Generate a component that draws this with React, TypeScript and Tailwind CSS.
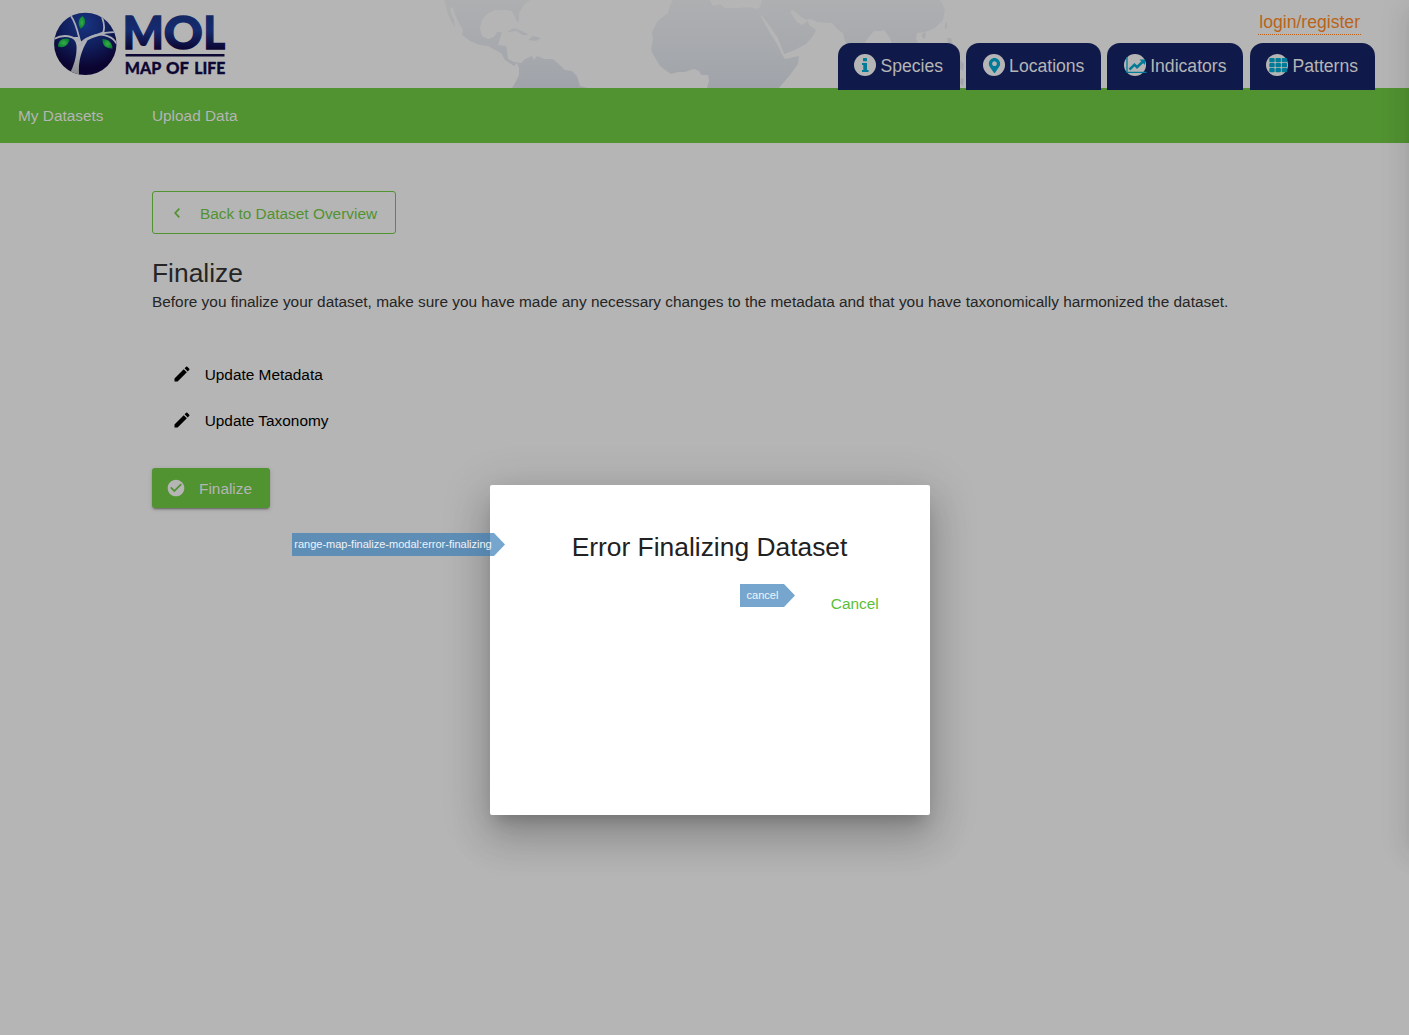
import React from "react";
import { MdEdit, MdCheckCircle } from "react-icons/md";
import { FaMapMarkerAlt } from "react-icons/fa";

function WorldMap() {
  return (
    <svg className="absolute left-[430px] top-0" width="560" height="88" viewBox="430 0 560 88">
      <defs>
        <linearGradient id="land" x1="0" y1="0" x2="0" y2="88" gradientUnits="userSpaceOnUse">
          <stop offset="0" stopColor="#aeafb1" />
          <stop offset="1" stopColor="#a0a4aa" />
        </linearGradient>
      </defs>
      <g fill="url(#land)">
        <path d="M444 0L446 6L448 14L451 21L455 27L454 20L451 13L450 7L453 8L456 17L460 25L463 30L462 35L470 41L480 45L488 46L495 50L501 53L505 60L511 64L514 66L517 63L519 68L519 75L515 83L512 88H588L580 86L577 76L572 71L565 70L560 65L553 59L545 59L537 56L534 60L532 56L525 59L521 63L514 62L508 59L507 50L506 46L498 45L502 32L497 32L494 37L488 39L482 36L480 28L482 20L487 14L495 10L505 10L512 11L515 17L517 22L519 21L519 13L523 6L530 0Z" />
        <path d="M508 31L514 28L522 31L529 35L522 35L517 31L508 32ZM528 40L533 36L541 38L536 41Z" />
        <path fillRule="evenodd" d="M673 0L670 5L668 13L660 19L657 22L652 32L653 40L651 50L654 56L660 66L665 70L671 74L678 72L685 72L694 69L699 71L701 75L708 75L709 81L707 88H779L790 75L798 64L799 56L785 59L783 56L777 44L770 33L760 15L763 17L771 28L778 38L784 54L795 50L806 44L813 36L816 30L809 25L808 21L802 25L797 22L790 12L793 10L800 16L806 20L811 19L817 22L832 23L838 30L843 33L844 38L847 45H864L868 38L874 31L880 31L884 30L890 38L892 45H920L916 39L917 33L925 32L935 28L943 20L945 10L942 3L940 0H762L761 5L758 9L749 7L738 8L725 8L720 4L713 6L710 0Z" />
        <path d="M922 34L926 32L925 39L922 37ZM945 24L947 22L947 28L945 29ZM947 38L951 38L953 45L948 44ZM960 60L964 64L963 71L960 69ZM961 78L964 79L963 86L960 83Z" />
      </g>
    </svg>
  );
}

function Logo() {
  return (
    <svg className="absolute left-[53px] top-0" width="185" height="88" viewBox="53 0 185 88">
      <defs>
        <radialGradient id="globe" cx="85" cy="24" r="52" gradientUnits="userSpaceOnUse">
          <stop offset="0" stopColor="#183481" />
          <stop offset="0.45" stopColor="#101e5c" />
          <stop offset="0.85" stopColor="#0b0430" />
        </radialGradient>
        <linearGradient id="letters" x1="0" y1="14" x2="0" y2="50" gradientUnits="userSpaceOnUse">
          <stop offset="0" stopColor="#142763" />
          <stop offset="0.45" stopColor="#152b70" />
          <stop offset="1" stopColor="#0c0430" />
        </linearGradient>
        <linearGradient id="trunk" x1="0" y1="50" x2="0" y2="75" gradientUnits="userSpaceOnUse">
          <stop offset="0" stopColor="#b0b2b8" />
          <stop offset="1" stopColor="#898a8e" />
        </linearGradient>
        <radialGradient id="leaf">
          <stop offset="0" stopColor="#3aad49" />
          <stop offset="1" stopColor="#098134" />
        </radialGradient>
        <clipPath id="disc"><circle cx="85.3" cy="43.9" r="31.2" /></clipPath>
      </defs>
      <circle cx="85.3" cy="43.9" r="31.2" fill="url(#globe)" />
      <g clipPath="url(#disc)">
        <path fill="url(#trunk)" d="M68 77C74 66 77 56 76.500 46C76 41 74 39 70 37L78 37L82 42L90 36.500C82 48 77 62 79.500 78Z" />
        <g fill="none" stroke="#a9acb4">
          <path strokeWidth="1.800" d="M54 39C62 34.500 71 35.500 79 41M71 16C76 23 77.500 31 80 41" />
          <path strokeWidth="2.600" d="M80 46C84 37.500 94 36.500 103 33" />
          <path strokeWidth="1.800" d="M102 34.500C105.500 30 104.500 24 102 17M102 33.500C107 32.500 112 32.500 118 31.500M88 39C98 31 112 35 117 44" />
        </g>
      </g>
      <path fill="url(#leaf)" d="M82.500 16C86.500 19 86 26 80.500 28.800C77.500 24 78 19 82.500 16Z" />
      <path fill="url(#leaf)" d="M58 46.500C58 40 64 37 69.500 39.500C68 46 63 48.500 58 46.500Z" />
      <path fill="url(#leaf)" d="M102.500 39C109 39 112 43 112.500 48.500C106 49 102 45 102.500 39Z" />
      <g fontFamily="Lato" fontWeight="900">
        <g fontSize="46" fill="url(#letters)" stroke="url(#letters)" strokeWidth="1.500">
          <text x="122.800" y="48.500" textLength="41" lengthAdjust="spacingAndGlyphs">M</text>
          <text x="163.800" y="48.500" textLength="39" lengthAdjust="spacingAndGlyphs">O</text>
          <text x="203.500" y="48.500" textLength="21.500" lengthAdjust="spacingAndGlyphs">L</text>
        </g>
        <g fontSize="16.500" fill="#0d0733" stroke="#0d0733" strokeWidth=".3">
          <text x="124.800" y="73.700" textLength="36.500" lengthAdjust="spacingAndGlyphs">MAP</text>
          <text x="166" y="73.700" textLength="23" lengthAdjust="spacingAndGlyphs">OF</text>
          <text x="194.300" y="73.700" textLength="31" lengthAdjust="spacingAndGlyphs">LIFE</text>
        </g>
      </g>
      <rect x="125.500" y="54" width="99" height="2.600" rx=".5" fill="#0d0733" />
    </svg>
  );
}

function InfoIcon() {
  return (
    <svg width="22" height="22" viewBox="0 0 22 22" fill="#007b98">
      <rect x="9" y="4" width="4" height="3.200" rx=".5" />
      <path d="M8 9H13V16H14.500V18H8V16H9.300V11H8Z" />
    </svg>
  );
}

function ChartIcon() {
  return (
    <svg width="22" height="22" viewBox="0 0 22 22" className="overflow-visible" fill="none" stroke="#007b98">
      <path d="M3 3V18.400H22.500" strokeWidth="1.300" />
      <path d="M5.500 15.500L10.500 10.700L13 13.200L19 7.500" strokeWidth="2.500" />
      <path d="M15.500 5.500H21V11Z" fill="#007b98" stroke="none" />
    </svg>
  );
}

function GridIcon() {
  return (
    <svg width="22" height="22" viewBox="0 0 22 22" fill="#007b98">
      {[4, 9, 14].map((y) => [3.3, 9.5, 15.7].map((x) => (
        <rect key={`${x}-${y}`} x={x} y={y} width="5.400" height="4.200" rx="0.900" />
      )))}
    </svg>
  );
}

const tabs = [
  { label: "Species", size: "w-[122px] mr-[6px] pl-4", icon: <InfoIcon /> },
  { label: "Locations", size: "w-[135px] mr-[6px] pl-[16.6px]", icon: <FaMapMarkerAlt size={15} color="#007b98" className="ml-[1.5px]" /> },
  { label: "Indicators", size: "w-[136px] mr-[7px] pl-[16.7px]", icon: <ChartIcon /> },
  { label: "Patterns", size: "w-[125px] pl-4", icon: <GridIcon /> },
];

function Header() {
  return (
    <header className="relative flex h-[88px] flex-col items-end">
      <WorldMap />
      <Logo />
      <a className="relative mr-[48px] mt-[10px] h-[25px] border-b border-dotted border-[#b96419] px-px text-[17.6px] leading-6 text-[#b96419]">login/register</a>
      <nav className="relative z-10 mr-[34px] mt-2 flex">
        {tabs.map((t) => (
          <a key={t.label} className={`flex h-[47px] rounded-t-[13px] bg-[#101a4a] pt-[11px] ${t.size}`}>
            <span className="flex size-[22px] shrink-0 items-center justify-center rounded-full bg-[#b5b5b5]">{t.icon}</span>
            <span className="ml-[4.500px] text-[17.6px] leading-6 text-[#b5b5b5]">{t.label}</span>
          </a>
        ))}
      </nav>
    </header>
  );
}

function Tag({ children, className }: { children: React.ReactNode; className: string }) {
  return (
    <div className={`absolute flex h-[23px] items-center justify-center bg-[#357ab7]/68 text-[11px] text-white/90 [clip-path:polygon(0_0,calc(100%-11px)_0,100%_50%,calc(100%-11px)_100%,0_100%)] ${className}`}>
      {children}
    </div>
  );
}

function Modal() {
  return (
    <div role="dialog" className="absolute left-[490px] top-[485px] flex h-[330px] w-[440px] flex-col rounded-[2px] bg-white px-[34px] pt-[46px] shadow-[0_11px_15px_-7px_rgba(0,0,0,0.2),0_24px_38px_3px_rgba(0,0,0,0.14),0_9px_46px_8px_rgba(0,0,0,0.12)]">
      <h2 className="pr-px text-center text-[26.4px] leading-8 text-[#212121]">Error Finalizing Dataset</h2>
      <button className="mr-[17.3px] mt-[31px] self-end text-[15.4px] leading-5 text-[#5bbf3a]">Cancel</button>
    </div>
  );
}

export default function App() {
  return (
    <div className="relative h-[1035px] w-[1409px] overflow-hidden bg-[#b5b5b5] font-['Liberation_Sans',sans-serif] text-[15.4px] text-[#252525]">
      <Header />
      <nav className="flex h-[55px] items-center gap-[48.4px] bg-[#519231] pl-[18px] text-[#b5b5b5]">
        <a>My Datasets</a>
        <a>Upload Data</a>
      </nav>
      <main className="flex flex-col items-start pl-[152px] pt-12">
        <button className="flex h-[43px] w-[244px] items-center rounded-[3px] border border-[#519231] pl-[15px] text-[#519231]">
          <svg width="18" height="18" viewBox="0 0 18 18" fill="none" stroke="#519231" strokeWidth="1.700">
            <path d="M11.300 4.700L7.200 9L11.300 13.300" />
          </svg>
          <span className="ml-[14px] mt-[2px]">Back to Dataset Overview</span>
        </button>
        <h1 className="mt-[23px] text-[26.4px] leading-8">Finalize</h1>
        <p className="mt-[3px] leading-5">Before you finalize your dataset, make sure you have made any necessary changes to the metadata and that you have taxonomically harmonized the dataset.</p>
        <div className="mt-[53px] flex flex-col gap-[26px] pl-5 text-black">
          {["Update Metadata", "Update Taxonomy"].map((label) => (
            <a key={label} className="flex h-5 items-center">
              <MdEdit size={20} className="-ml-[0.5px] -mt-[2px]" />
              <span className="ml-[13.200px]">{label}</span>
            </a>
          ))}
        </div>
        <button className="mt-[37px] flex h-10 w-[118px] items-center rounded-[3px] bg-[#519231] pl-[14px] text-[#b5b5b5] shadow-[0_3px_1px_-2px_rgba(0,0,0,0.2),0_2px_2px_0_rgba(0,0,0,0.14),0_1px_5px_0_rgba(0,0,0,0.12)]">
          <MdCheckCircle size={20} color="#b5b5b5" className="-mt-px" />
          <span className="ml-[13px] mt-[2px]">Finalize</span>
        </button>
      </main>
      <aside className="absolute left-[1409px] top-0 z-20 h-[843px] w-80 shadow-[0_8px_10px_-5px_rgba(0,0,0,0.08),0_16px_24px_2px_rgba(0,0,0,0.05),0_6px_30px_5px_rgba(0,0,0,0.06)]" />
      <Modal />
      <Tag className="left-[292px] top-[533px] w-[213px] whitespace-nowrap pb-px pr-[11px]">range-map-finalize-modal:error-finalizing</Tag>
      <Tag className="left-[740px] top-[584px] w-[55px] pr-[10px]">cancel</Tag>
    </div>
  );
}
